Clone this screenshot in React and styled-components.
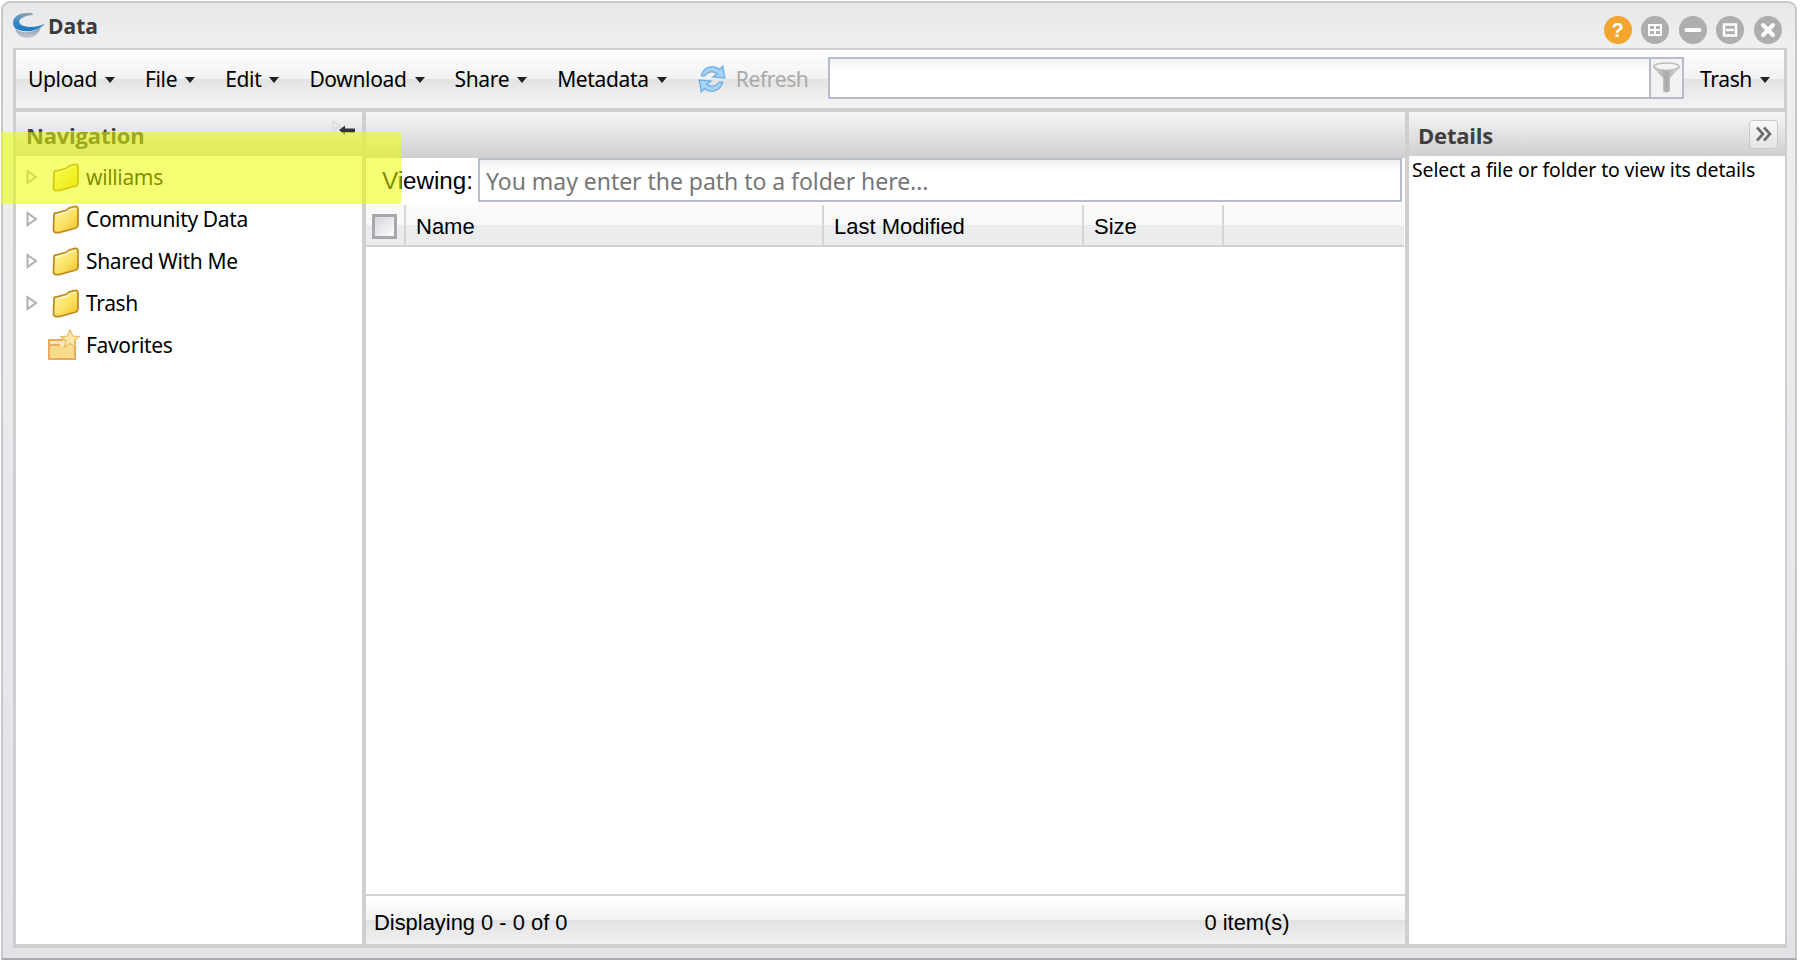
import React from "react";
import styled, { createGlobalStyle } from "styled-components";

const Global = createGlobalStyle`
  html, body { margin: 0; padding: 0; background: #fff; }
  body { font-family: "Noto Sans", "DejaVu Sans", sans-serif; color: #000; }
  * { box-sizing: border-box; }
`;
const Page = styled.div`
  position: relative; width: 1800px; height: 960px; overflow: hidden; background: #fff;
  padding: 1px 3px 0 1px;
`;
const Win = styled.div`
  height: 959px; display: flex; flex-direction: column;
  border: 2px solid #c6c7c9; border-bottom: 2px solid #a9aaac; border-radius: 9px 9px 0 0;
  background: linear-gradient(#e6e7e9, #eeeff1 40px, #e2e3e7);
`;
const TitleBar = styled.div`
  height: 45px; flex: none; display: flex; align-items: center; padding: 0 13px 0 9px;
`;
const TitleText = styled.span`
  font: bold 21px/1 "Open Sans", sans-serif; color: #3b3b3b; margin-left: 2px; margin-top: 1px;
`;
const WinButtons = styled.div`
  margin-left: auto; display: flex; gap: 9.6px; margin-top: 8px;
`;
const WinBtn = styled.div`
  width: 28px; height: 28px; border-radius: 50%; background: ${p => p.$c || "#aeaeae"};
  display: flex; align-items: center; justify-content: center;
  color: #fff; font: bold 20px/1 "Liberation Sans", sans-serif; opacity: ${p => p.$c ? .95 : 1};
`;
const Body = styled.div`
  flex: none; width: 1774px; height: 900px; margin-left: 10px;
  border: 2px solid #cfcfcf; border-width: 2px 3px 4px 3px; background: #cfcfcf;
  display: flex; flex-direction: column;
`;
const Toolbar = styled.div`
  height: 58px; flex: none; display: flex; align-items: center; padding: 0 14px 0 12px;
  background: linear-gradient(#fff, #f1f1f1 50%, #e3e3e3 50%, #f5f5f5);
`;
const Menu = styled.div`
  display: flex; align-items: center; font-size: 21px; margin-right: 30px; letter-spacing: -.35px;
  &::after { content: ""; margin-left: 8px; margin-top: 1px; border: 5.5px solid transparent; border-top: 6px solid #222; border-bottom: 0; }
`;
const RefreshBtn = styled.div`
  display: flex; align-items: center; gap: 7px; font-size: 21px; color: #a9a9a9; letter-spacing: -.35px; margin-left: -2px; margin-right: 19px;
`;
const FilterBox = styled.div`
  flex: 1; display: flex; height: 42px; margin-top: -2px; border: 2px solid #b7bbd0;
  background: linear-gradient(#f0f1f3, #fff 12px);
`;
const FilterBtn = styled.div`
  width: 35px; background: #f2f2f2; display: flex; align-items: center; justify-content: center;
  margin: -2px -2px -2px auto; border: 2px solid #b7bbd0;
`;
const TrashMenu = styled(Menu)`
  margin: 0 0 0 16px;
`;
const Panels = styled.div`
  flex: 1; min-height: 0; margin-top: 4px; display: grid; grid-template-columns: 346px 1039px 376px; column-gap: 4px;
  & > * { min-width: 0; }
`;
const Panel = styled.div`
  background: #fff; display: flex; flex-direction: column; min-height: 0;
`;
const PanelHead = styled.div`
  height: ${p => p.$h || 44}px; flex: none; display: flex; align-items: center; padding: 0 6px 0 10px;
  background: linear-gradient(#f6f6f6, #cfcfd0);
  font: bold 22px/1 "Open Sans", sans-serif; color: #3f3f3f;
`;
const HeadLabel = styled.span`
  letter-spacing: -.2px; margin-top: 2px; margin-left: ${p => p.$x || 0}px;
`;
const Collapse = styled.div`
  margin-left: auto; margin-top: -6px; line-height: 0;
`;
const Expand = styled.div`
  margin-left: auto; width: 29px; height: 29px; border: 1.5px solid #c9c9c9; border-radius: 4px;
  background: linear-gradient(#f8f8f8, #e4e4e4); display: flex; align-items: center; justify-content: center;
  position: relative; left: -1px;
`;
const Tree = styled.div`
  padding: 0;
`;
const Row = styled.div`
  height: 42px; display: flex; align-items: center; padding-left: 10px; font-size: 21px; letter-spacing: -.35px;
`;
const Arrow = styled.div`
  width: 26px; flex: none; line-height: 0;
`;
const RowIcon = styled.div`
  width: 34px; flex: none; line-height: 0;
`;
const FavIcon = styled(RowIcon)`
  margin-left: 22px; width: 38px;
`;
const ViewRow = styled.div`
  height: 46px; flex: none; display: flex; align-items: center; padding: 0 3px 2px 17px;
`;
const ViewLabel = styled.span`
  font: 24.2px/1 "Liberation Sans", sans-serif; margin: 2px 5px 0 -1px;
`;
const PathInput = styled.div`
  flex: 1; height: 44px; border: 2px solid #b7bbd0; display: flex; align-items: center; padding: 2px 0 0 6px;
  background: linear-gradient(#f0f1f3, #fff 12px);
  font-size: 23px; color: #777; letter-spacing: -.04px;
`;
const GridHead = styled.div`
  height: 42px; flex: none; display: flex; margin: 1px 1px 0 0; border-bottom: 2px solid #d2d2d2;
  background: linear-gradient(#f9f9f9 50%, #ebecee 50%);
  font: 22px/1 "Liberation Sans", sans-serif;
`;
const Col = styled.div`
  width: ${p => p.$w}px; flex: none; display: flex; align-items: center; padding: 4px 0 0 10px; border-right: 2px solid #d4d4d4;
`;
const CheckCol = styled(Col)`
  padding: 2px 0 0 6px;
`;
const Check = styled.div`
  width: 25px; height: 25px; border: 3px solid #a6a8ac; background: linear-gradient(135deg, #d5d7dd, #fcfcfc);
`;
const GridBody = styled.div`
  flex: 1;
`;
const Footer = styled.div`
  height: 50px; flex: none; border-top: 2px solid #d2d2d2; display: flex; align-items: center; padding: 5px 8px 0;
  background: linear-gradient(#fff, #f2f2f2 50%, #e2e2e2 50%, #f1f1f1);
  font: 21.9px/1 "Liberation Sans", sans-serif;
`;
const Count = styled.span`
  margin-left: 637px; margin-top: 1px;
`;
const DetailText = styled.div`
  font-size: 19.4px; padding: 0 3px; letter-spacing: -.1px; white-space: nowrap;
`;
const Highlight = styled.div`
  position: absolute; left: 1px; top: 132px; width: 400px; height: 72px; background: rgba(235,255,0,.55); pointer-events: none;
`;

const Logo = () => (
  <svg width="34" height="28" viewBox="0 0 34 28">
    <defs>
      <linearGradient id="lg" x1="0" y1="0" x2="0" y2="1"><stop offset="0" stopColor="#9aa4ae"/><stop offset=".45" stopColor="#3a8ccb"/><stop offset="1" stopColor="#1b78bb"/></linearGradient>
      <linearGradient id="lg2" x1="0" y1="0" x2="0" y2="1"><stop offset="0" stopColor="#7c90a4"/><stop offset="1" stopColor="#c9ccd0"/></linearGradient>
    </defs>
    <path d="M20 1C10 0 1 3 1 11c0 3 2 6 6 7 8 3 18 1 26-6-8 3-16 4-21 2C6 12 6 8 10 6c3-2 7-3 11-3z" fill="url(#lg)"/>
    <path d="M3 17c7 5 20 4 26-3-1 7-7 12-14 12-6 0-10-4-12-9z" fill="url(#lg2)"/>
  </svg>
);
const Folder = ({ id }) => (
  <svg width="27" height="29" viewBox="0 0 27 29">
    <defs>
      <linearGradient id={id} x1="0" y1="0" x2="1" y2="1"><stop offset="0" stopColor="#fff6b0"/><stop offset=".55" stopColor="#fbe264"/><stop offset="1" stopColor="#f0bd22"/></linearGradient>
    </defs>
    <path d="M2 10Q2 8 4 8L15 5 17 3 23 1.500Q26 1 26 4L26 20Q26 22 24 23L7 27.500Q2 28.500 1.500 25Z" fill={`url(#${id})`} stroke="#bf8c22" strokeWidth="1.800"/>
    <path d="M4 10 15 7 17 5 23.500 3.500" fill="none" stroke="#fffbd8" strokeWidth="1.200"/>
  </svg>
);
const TreeArrow = () => (
  <svg width="12" height="16" viewBox="0 0 12 16"><path d="M1.500 2 10 8 1.500 14Z" fill="#fff" stroke="#b0b0b0" strokeWidth="2"/></svg>
);
const Fav = () => (
  <svg width="32" height="32" viewBox="0 0 32 32">
    <path d="M1 11H14L16 8H27V30H1Z" fill="#fbe8b4" stroke="#eaaa5c" strokeWidth="2"/>
    <path d="M2 17H26V29H2Z" fill="#f8dc8b"/>
    <path d="M1 16H12" stroke="#eaaa5c" strokeWidth="2"/>
    <path d="M22 1l2.800 6 6.200.6-4.700 4.200 1.400 6.200-5.700-3.200-5.700 3.200 1.400-6.200-4.700-4.200 6.200-.6z" fill="#fbe7a6" stroke="#eab860" strokeWidth="1.200"/>
  </svg>
);
const RefreshIcon = () => (
  <svg width="34" height="32" viewBox="0 0 30 30">
    <path d="M5 12C7 4 16 1 22 6l3-3 2 11-11-1 4-3c-4-3-9-2-12 2z" fill="#a9d3f4" stroke="#6eb0e6" strokeWidth="1.300"/>
    <path d="M25 18c-2 8-11 11-17 6l-3 3-2-11 11 1-4 3c4 3 9 2 12-2z" fill="#a9d3f4" stroke="#6eb0e6" strokeWidth="1.300"/>
  </svg>
);
const Funnel = () => (
  <svg width="29" height="32" viewBox="0 0 30 34">
    <defs><linearGradient id="fg" x1="0" x2="1" y1="0" y2="0"><stop offset="0" stopColor="#d6d6d6"/><stop offset=".5" stopColor="#a9a9a9"/><stop offset="1" stopColor="#e4e4e4"/></linearGradient></defs>
    <ellipse cx="15" cy="5" rx="13.500" ry="4" fill="#f4f4f4" stroke="#bcbcbc" strokeWidth="1.500"/>
    <path d="M2 6 12 17V31Q15 33 18 31V17L28 6Q15 12 2 6Z" fill="url(#fg)" stroke="#b4b4b4"/>
  </svg>
);
const CollapseIcon = () => (
  <svg width="24" height="22" viewBox="0 0 24 22">
    <path d="M1 1 8 6 1 11Z" fill="none" stroke="#d8d8d8" strokeWidth="1.200"/>
    <path d="M1 11 8 16 1 21Z" fill="none" stroke="#e2e2e2" strokeWidth="1.200"/>
    <path d="M7 10 13 5.500V8.500H23V12.500H13V15Z" fill="#333"/>
  </svg>
);
const Chevrons = () => (
  <svg width="18" height="16" viewBox="0 0 18 16"><path d="M2 1.500 8 8 2 14.500M9 1.500 15 8 9 14.500" fill="none" stroke="#6d6d6d" strokeWidth="2.600"/></svg>
);
const Glyph = ({ d, w = 3 }) => (
  <svg width="18" height="18" viewBox="0 0 18 18"><path d={d} fill="none" stroke="#fff" strokeWidth={w} strokeLinecap="round"/></svg>
);

const menus = ["Upload", "File", "Edit", "Download", "Share", "Metadata"];
const tree = ["williams", "Community Data", "Shared With Me", "Trash"];

export default function App() {
  return (
    <Page>
      <Global />
      <Win>
        <TitleBar>
          <Logo />
          <TitleText>Data</TitleText>
          <WinButtons>
            <WinBtn $c="#f5a226">?</WinBtn>
            <WinBtn><Glyph w={2} d="M3 4h12v10H3zM9 4v10M3 9h12" /></WinBtn>
            <WinBtn><Glyph w={4} d="M2.500 9h13" /></WinBtn>
            <WinBtn><Glyph w={2.600} d="M3 3.500h12v11H3zM6 9h6" /></WinBtn>
            <WinBtn><Glyph w={4} d="M4 4l10 10M14 4L4 14" /></WinBtn>
          </WinButtons>
        </TitleBar>
        <Body>
          <Toolbar>
            {menus.map(m => <Menu key={m}>{m}</Menu>)}
            <RefreshBtn><RefreshIcon />Refresh</RefreshBtn>
            <FilterBox><FilterBtn><Funnel /></FilterBtn></FilterBox>
            <TrashMenu>Trash</TrashMenu>
          </Toolbar>
          <Panels>
            <Panel>
              <PanelHead>
                <HeadLabel>Navigation</HeadLabel>
                <Collapse><CollapseIcon /></Collapse>
              </PanelHead>
              <Tree>
                {tree.map((t, i) => (
                  <Row key={t}>
                    <Arrow><TreeArrow /></Arrow>
                    <RowIcon><Folder id={`folder${i}`} /></RowIcon>
                    {t}
                  </Row>
                ))}
                <Row>
                  <FavIcon><Fav /></FavIcon>
                  Favorites
                </Row>
              </Tree>
            </Panel>
            <Panel>
              <PanelHead $h={46} />
              <ViewRow>
                <ViewLabel>Viewing:</ViewLabel>
                <PathInput>You may enter the path to a folder here...</PathInput>
              </ViewRow>
              <GridHead>
                <CheckCol $w={40}><Check /></CheckCol>
                <Col $w={418}>Name</Col>
                <Col $w={260}>Last Modified</Col>
                <Col $w={140}>Size</Col>
              </GridHead>
              <GridBody />
              <Footer>
                Displaying 0 - 0 of 0
                <Count>0 item(s)</Count>
              </Footer>
            </Panel>
            <Panel>
              <PanelHead>
                <HeadLabel $x={-1}>Details</HeadLabel>
                <Expand><Chevrons /></Expand>
              </PanelHead>
              <DetailText>Select a file or folder to view its details</DetailText>
            </Panel>
          </Panels>
        </Body>
      </Win>
      <Highlight />
    </Page>
  );
}
